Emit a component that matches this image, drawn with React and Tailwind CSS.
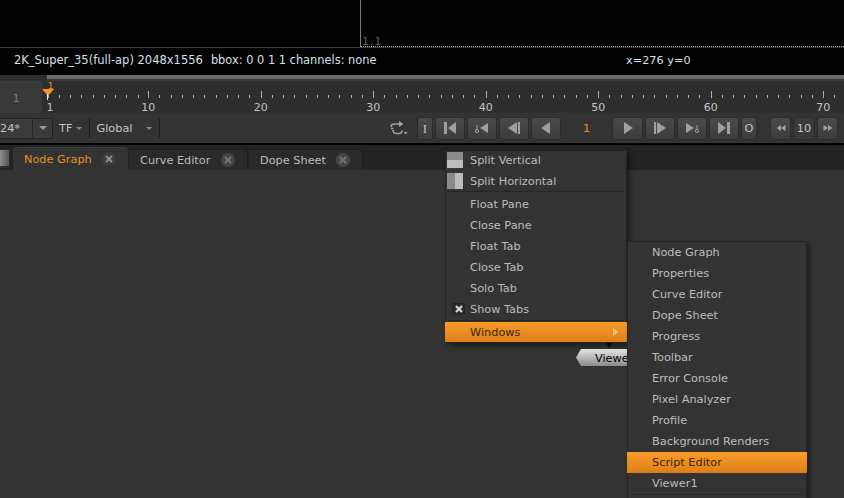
import React from "react";

const frames = Array.from({ length: 72 }, (_, i) => i + 1);
const labels = [10, 20, 30, 40, 50, 60, 70];
const tickX = (f) => 47.5 + (f - 1) * 11.25 - (f >= 10 ? 0.6 : 0);

const Ruler = () => (
  <svg width="802" height="32" className="block overflow-visible" style={{ fontFamily: "'DejaVu Sans', sans-serif" }}>
    {frames.map((f) => {
      const x = Math.round(tickX(f)) - 42 + 0.5;
      const major = f % 10 === 0;
      return <line key={f} x1={x} x2={x} y1={major ? 10 : 14} y2="17" stroke="#b0b0b0" strokeWidth="1" />;
    })}
    <text x="8" y="30" fontSize="11" fill="#c4c4c4" textAnchor="middle">1</text>
    {labels.map((f) => (
      <text key={f} x={tickX(f) - 42} y="30" fontSize="11" fill="#c4c4c4" textAnchor="middle">{f}</text>
    ))}
    <path d="M0 8h12l-6 7z" fill="#f7931e" />
    <line x1="5.5" x2="5.5" y1="13" y2="19" stroke="#e8e8e8" />
    <text x="8.5" y="7.5" fontSize="9" fill="#e8901f" textAnchor="middle">1</text>
  </svg>
);

const Icon = ({ d, w = 16 }) => (
  <svg width={w} height="14" viewBox="0 0 16 14" fill="#a0a0a0">
    {d.map((p) => <path key={p} d={p} />)}
  </svg>
);

const KeyDot = ({ x }) => (
  <g>
    <circle cx={x} cy="10" r="1.6" fill="none" stroke="#a0a0a0" />
    <line x1={x} x2={x} y1="4" y2="8" stroke="#a0a0a0" />
  </g>
);

const TButton = ({ w, children }) => (
  <button
    className={`flex h-[23px] items-center justify-center rounded-[3px] border border-[#2a2a2a] bg-gradient-to-b from-[#4a4a4a] to-[#3c3c3c] ${w}`}
  >
    {children}
  </button>
);

const Tab = ({ label, active, w }) => (
  <div
    className={`flex items-center rounded-t-[3px] ${w} ${
      active ? "h-[23px] border-t border-[#3d3d3d] bg-[#333333] text-[#e8901f]" : "h-[21px] border-r border-t border-[#1f1f1f] bg-[#2a2a2a] text-[#bcbcbc]"
    }`}
  >
    <span className="ml-[11px] pt-[2px]">{label}</span>
    <span className={`ml-auto mr-[12px] flex h-[14px] w-[14px] items-center justify-center rounded-full ${active ? "bg-[#3c3c3c]" : "bg-[#454545]"}`}>
      <svg width="8" height="8" viewBox="0 0 8 8"><path d="M1 1l6 6M7 1l-6 6" stroke={active ? "#8f8f8f" : "#747474"} strokeWidth="2" /></svg>
    </span>
  </div>
);

const Item = ({ label, highlight, wide, h = "h-[21px]", pt = "", children, arrow }) => (
  <div
    className={`relative flex items-center ${h} ${pt} ${
      highlight ? `bg-gradient-to-b from-[#fb9c29] to-[#dc7f18] pl-[25px] text-[#3f2608] ${wide}` : "pl-[24px] text-[#bdbdbd]"
    }`}
  >
    {children}
    {label}
    {arrow && <span className="absolute right-[9px] top-[6px] h-0 w-0 border-y-[4px] border-l-[5px] border-y-transparent border-l-[#f5c48a]" />}
  </div>
);

const Divider = ({ inset }) => <div className={`h-px bg-[#262626] ${inset}`} />;

const SwatchV = () => (
  <div className="absolute left-[1px] top-[2px] flex h-4 w-4 flex-col">
    <div className="flex-1 bg-[#8a8a8a]" />
    <div className="flex-1 bg-[#bdbdbd]" />
  </div>
);

const SwatchH = () => (
  <div className="absolute left-[1px] top-[2px] flex h-4 w-4">
    <div className="flex-1 bg-[#8a8a8a]" />
    <div className="flex-1 bg-[#bdbdbd]" />
  </div>
);

const firstMenu = ["Float Pane", "Close Pane", "Float Tab", "Close Tab", "Solo Tab"];
const windowsMenu = ["Node Graph", "Properties", "Curve Editor", "Dope Sheet", "Progress", "Toolbar", "Error Console", "Pixel Analyzer", "Profile", "Background Renders"];

export default function App() {
  return (
    <div
      className="relative flex h-[498px] w-[844px] flex-col overflow-hidden bg-[#333333] text-[11.3px] leading-none text-[#c4c4c4]"
      style={{ fontFamily: "'DejaVu Sans', sans-serif" }}
    >
      {/* viewer */}
      <div className="relative h-[47px] shrink-0 bg-black">
        <div className="absolute bottom-0 left-[360px] top-0 w-px bg-[#787878]" />
        <span className="absolute bottom-0 left-[362px] text-[11px] tracking-[1px] text-[#5c5c5c]">1,1</span>
        <div className="absolute bottom-0 left-[360px] right-0 h-px border-b border-dotted border-[#b0b0b0]" />
      </div>
      <div className="h-px shrink-0 bg-[#3a3a3a]" />
      <div className="relative flex h-[27px] shrink-0 items-center bg-black pb-px pl-[14px] text-[#d5e0e8]">
        <span className="text-[11.5px]">2K_Super_35(full-ap) 2048x1556</span>
        <span className="ml-[8px] text-[11.4px]">bbox: 0 0 1 1 channels: none</span>
        <span className="absolute left-[626px]">x=276 y=0</span>
      </div>

      {/* timeline */}
      <div className="flex h-[6px] shrink-0 bg-[#2e2e2e]">
        <div className="ml-[47px] h-full flex-1 bg-[#3a3a3a]">
          <div className="h-[4px] bg-[#6b6b6b]" />
        </div>
      </div>
      <div className="flex h-[32px] shrink-0 bg-[#2e2e2e]">
        <div className="flex w-[42px] items-center justify-center bg-[#383838] pr-[10px] pt-[3px] text-[#6f8080]">1</div>
        <Ruler />
      </div>

      {/* transport */}
      <div className="flex h-[30px] shrink-0 items-center bg-[#333333]">
        <div className="flex w-[390px] shrink-0 items-center">
          <div className="flex h-[21px] w-[53px] items-center rounded-r-[3px] border border-l-0 border-[#232323] bg-[#3b3b3b]">
            <span className="w-[32px] pt-[2px]">24*</span>
            <div className="flex h-full flex-1 items-center justify-center border-l border-[#262626]">
              <span className="h-0 w-0 border-x-[4px] border-t-[4px] border-x-transparent border-t-[#9a9a9a]" />
            </div>
          </div>
          <span className="ml-[6px] pt-[2px]">TF</span>
          <span className="ml-[4px] h-0 w-0 border-x-[3px] border-t-[3px] border-x-transparent border-t-[#8a8a8a]" />
          <span className="ml-[7px] h-[20px] w-px bg-[#1d1d1d]" />
          <span className="ml-[6px] pt-[2px]">Global</span>
          <span className="ml-[14px] h-0 w-0 border-x-[3px] border-t-[3px] border-x-transparent border-t-[#8a8a8a]" />
          <span className="ml-[7px] h-[20px] w-px bg-[#1d1d1d]" />
        </div>
        <svg width="18" height="14" viewBox="0 0 18 14" fill="none" stroke="#a0a0a0" strokeWidth="1.5" className="shrink-0">
          <path d="M1 6c0-2 1-3 3-3h6" />
          <path d="M9 0l4.5 3L9 6z" fill="#a0a0a0" stroke="none" />
          <path d="M1 7.5h2.5M3 9c0 2.500 1.500 3.500 3.500 3.500h3c1.500 0 2.500-1 2.500-3" />
          <path d="M13.500 11h4l-2 2.500z" fill="#a0a0a0" stroke="none" />
        </svg>

        <div className="ml-[9px] flex items-center gap-[2px]">
          <TButton w="w-[16px]"><span className="text-[13px] text-[#c8c8b0]" style={{ fontFamily: "'Liberation Serif', serif" }}>I</span></TButton>
          <TButton w="w-[30px]"><Icon d={["M2 1h3v12H2z", "M14 1v12L6 7z"]} /></TButton>
          <TButton w="w-[30px]">
            <svg width="16" height="14" viewBox="0 0 16 14" fill="#a0a0a0"><KeyDot x={3} /><path d="M14 2v10L6 7z" /></svg>
          </TButton>
          <TButton w="w-[30px]"><Icon d={["M11 1v12L2 7z", "M12 1h2v12h-2z"]} /></TButton>
          <TButton w="w-[30px]"><Icon d={["M12 1v12L3 7z"]} /></TButton>
        </div>
        <span className="w-[51px] pt-[2px] text-center text-[#e8901f]">1</span>
        <div className="flex items-center gap-[2px]">
          <TButton w="w-[31px]"><Icon d={["M4 1v12l9-6z"]} /></TButton>
          <TButton w="w-[30px]"><Icon d={["M2 1h2v12H2z", "M5 1v12l9-6z"]} /></TButton>
          <TButton w="w-[30px]">
            <svg width="16" height="14" viewBox="0 0 16 14" fill="#a0a0a0"><path d="M2 2v10l8-5z" /><KeyDot x={13} /></svg>
          </TButton>
          <TButton w="w-[30px]"><Icon d={["M2 1v12l8-6z", "M11 1h3v12h-3z"]} /></TButton>
          <TButton w="w-[16px]"><span className="pt-[2px] text-[#b8c8d8]">O</span></TButton>
        </div>
        <div className="ml-[13px] flex items-center gap-[2px]">
          <TButton w="w-[21px]"><Icon w={12} d={["M8 3v8L2 7z", "M14 3v8L8 7z"]} /></TButton>
          <div className="flex h-[23px] w-[22px] items-center justify-center rounded-[3px] border border-[#2a2a2a] bg-[#3a3a3a] pt-[2px]">10</div>
          <TButton w="w-[21px]"><Icon w={12} d={["M2 3v8l6-4z", "M8 3v8l6-4z"]} /></TButton>
        </div>
      </div>

      <div className="h-[2px] shrink-0 bg-black" />

      {/* tabs */}
      <div className="flex h-[25px] shrink-0 items-end bg-[#232323]">
        <div className="mb-[2px] flex h-[19px] w-[10px] bg-[#2b2b2b]">
          <div className="mt-[1px] h-[16px] w-[9px] bg-gradient-to-r from-[#8f8f8f] to-[#555555]" />
        </div>
        <div className="ml-[3px] flex items-end gap-px">
          <Tab label="Node Graph" active w="w-[115px]" />
          <Tab label="Curve Editor" w="w-[119px]" />
          <Tab label="Dope Sheet" w="w-[114px]" />
        </div>
      </div>

      {/* node graph */}
      <div className="flex-1 bg-[#333333]" />

      {/* viewer node, partly under the menu */}
      <div
        className="absolute left-[576px] top-[349px] flex h-[17px] w-[60px] items-center bg-gradient-to-b from-[#e8e8e8] to-[#8a8a8a] pl-[19px] pt-[2px] text-black"
        style={{ clipPath: "polygon(0 50%, 5px 0, 100% 0, 100% 100%, 5px 100%)" }}
      >
        Viewer1
      </div>
      <div className="absolute left-[606px] top-[342px] h-0 w-0 border-x-[3px] border-t-[6px] border-x-transparent border-t-black" />

      {/* pane menu */}
      <div className="absolute left-[445px] top-[150px] w-[182px] border-x border-b border-[#242424] bg-[#333333] shadow-[inset_0_1px_0_#242424,3px_3px_5px_rgba(0,0,0,0.45)]">
        <Item label="Split Vertical"><SwatchV /></Item>
        <Item label="Split Horizontal" h="h-[20px]" pt="pt-[2px]"><SwatchH /></Item>
        <Divider inset="mx-[2px]" />
        <div className="h-[2px]" />
        {firstMenu.map((m) => <Item key={m} label={m} />)}
        <Item label="Show Tabs">
          <span className="absolute left-[6px] top-[4px] flex h-[12px] w-[13px] items-center justify-center border border-[#242424] bg-[#2b2b2b]">
            <svg width="8" height="8" viewBox="0 0 8 8"><path d="M1 1l6 6M7 1l-6 6" stroke="#d8d8d8" strokeWidth="2.2" /></svg>
          </span>
        </Item>
        <Divider inset="mx-[2px]" />
        <div className="h-px" />
        <Item label="Windows" highlight h="h-[20px]" pt="pt-[2px]" wide="-mx-px" arrow />
      </div>

      {/* windows submenu */}
      <div className="absolute left-[627px] top-[241px] w-[180px] border border-[#242424] bg-[#333333] shadow-[3px_3px_5px_rgba(0,0,0,0.45)]">
        {windowsMenu.map((m) => <Item key={m} label={m} />)}
        <Item label="Script Editor" highlight wide="-mx-px" />
        <Item label="Viewer1" />
        <Divider inset="mx-[4px]" />
        <div className="h-[20px]" />
      </div>
    </div>
  );
}
